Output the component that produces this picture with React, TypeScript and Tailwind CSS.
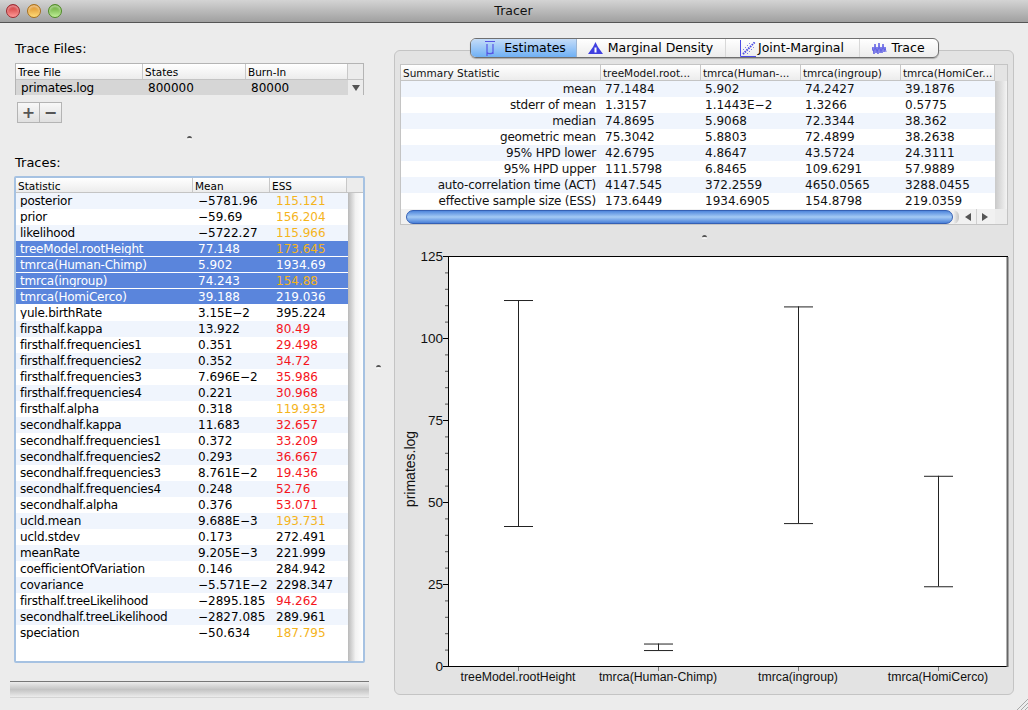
const files = { name: "primates.log", states: "800000", burn: "80000" }

const traces = [
  ["posterior", "-5781.96", "115.121", "o"],
  ["prior", "-59.69", "156.204", "o"],
  ["likelihood", "-5722.27", "115.966", "o"],
  ["treeModel.rootHeight", "77.148", "173.645", "o", 1],
  ["tmrca(Human-Chimp)", "5.902", "1934.69", "k", 1],
  ["tmrca(ingroup)", "74.243", "154.88", "o", 1],
  ["tmrca(HomiCerco)", "39.188", "219.036", "k", 1],
  ["yule.birthRate", "3.15E-2", "395.224", "k"],
  ["firsthalf.kappa", "13.922", "80.49", "r"],
  ["firsthalf.frequencies1", "0.351", "29.498", "r"],
  ["firsthalf.frequencies2", "0.352", "34.72", "r"],
  ["firsthalf.frequencies3", "7.696E-2", "35.986", "r"],
  ["firsthalf.frequencies4", "0.221", "30.968", "r"],
  ["firsthalf.alpha", "0.318", "119.933", "o"],
  ["secondhalf.kappa", "11.683", "32.657", "r"],
  ["secondhalf.frequencies1", "0.372", "33.209", "r"],
  ["secondhalf.frequencies2", "0.293", "36.667", "r"],
  ["secondhalf.frequencies3", "8.761E-2", "19.436", "r"],
  ["secondhalf.frequencies4", "0.248", "52.76", "r"],
  ["secondhalf.alpha", "0.376", "53.071", "r"],
  ["ucld.mean", "9.688E-3", "193.731", "o"],
  ["ucld.stdev", "0.173", "272.491", "k"],
  ["meanRate", "9.205E-3", "221.999", "k"],
  ["coefficientOfVariation", "0.146", "284.942", "k"],
  ["covariance", "-5.571E-2", "2298.347", "k"],
  ["firsthalf.treeLikelihood", "-2895.185", "94.262", "r"],
  ["secondhalf.treeLikelihood", "-2827.085", "289.961", "k"],
  ["speciation", "-50.634", "187.795", "o"],
] as const

const summary = [
  ["mean", "77.1484", "5.902", "74.2427", "39.1876"],
  ["stderr of mean", "1.3157", "1.1443E-2", "1.3266", "0.5775"],
  ["median", "74.8695", "5.9068", "72.3344", "38.362"],
  ["geometric mean", "75.3042", "5.8803", "72.4899", "38.2638"],
  ["95% HPD lower", "42.6795", "4.8647", "43.5724", "24.3111"],
  ["95% HPD upper", "111.5798", "6.8465", "109.6291", "57.9889"],
  ["auto-correlation time (ACT)", "4147.545", "372.2559", "4650.0565", "3288.0455"],
  ["effective sample size (ESS)", "173.6449", "1934.6905", "154.8798", "219.0359"],
]

const bars = [
  { label: "treeModel.rootHeight", lo: 42.68, hi: 111.58 },
  { label: "tmrca(Human-Chimp)", lo: 4.86, hi: 6.85 },
  { label: "tmrca(ingroup)", lo: 43.57, hi: 109.63 },
  { label: "tmrca(HomiCerco)", lo: 24.31, hi: 57.99 },
]

const minus = (s: string) => s.replace(/-/g, "\u2212")

const HeaderCell = ({ children, className }: any) => (
  <div className={"flex h-full items-center overflow-hidden whitespace-nowrap border-r border-[#c8c8c8] pl-[2px] pt-[2px] " + className}>{children}</div>
)

const SplitHandle = () => <div className="h-[4px] w-[5px] rounded-t-full border-t-2 border-[#555] bg-[#f4f4f4]" />

function TraceFiles() {
  return (
    <div className="w-[349px] border border-b-0 border-[#b4b4b4] bg-white">
      <div className="flex h-[16px] items-center border-b border-[#c4c4c4] bg-gradient-to-b from-white to-[#ececec] text-[10.5px] leading-none">
        <HeaderCell className="w-[127px]">Tree File</HeaderCell>
        <HeaderCell className="w-[103px]">States</HeaderCell>
        <HeaderCell className="w-[102px]">Burn-In</HeaderCell>
        <div className="h-full flex-1 bg-[#ececec]" />
      </div>
      <div className="flex h-[15px] items-center bg-[#d6d6d6] text-[12px] leading-none">
        <div className="w-[127px] pl-[5px] tracking-[-0.2px]">{files.name}</div>
        <div className="w-[103px] pl-[5px]">{files.states}</div>
        <div className="w-[102px] pl-[5px]">{files.burn}</div>
        <div className="flex h-full flex-1 justify-center bg-[#ececec] pt-[5px]">
          <div className="h-0 w-0 border-x-[4px] border-t-[6px] border-x-transparent border-t-[#555]" />
        </div>
      </div>
    </div>
  )
}

function TracesTable() {
  return (
    <div className="-ml-px flex h-[487px] w-[351px] flex-col rounded-[2px] border-2 border-[#a6c2e2] bg-white">
      <div className="flex h-[15px] shrink-0 items-center border-b border-[#c4c4c4] bg-gradient-to-b from-white to-[#ececec] text-[10.5px] leading-none">
        <HeaderCell className="w-[177px]">Statistic</HeaderCell>
        <HeaderCell className="w-[77px]">Mean</HeaderCell>
        <HeaderCell className="w-[77px]">ESS</HeaderCell>
        <div className="h-full flex-1 bg-[#ececec]" />
      </div>
      <div className="flex min-h-0 flex-1">
        <div className="w-[332px] text-[12px] leading-none">
          {traces.map((t, i) => {
            const selected = t.length > 4
            const rowBg = selected ? "bg-[#5a85dc] text-white border-b border-white" : i % 2 == 0 ? "bg-[#f0f5fd] text-black" : "bg-white text-black"
            const ess = t[3] == "o" ? "text-[#f5b41c]" : t[3] == "r" ? "text-[#f5141c]" : selected ? "text-white" : "text-black"
            return (
              <div key={t[0]} className={"flex h-[16px] items-center " + rowBg}>
                <div className="w-[177px] truncate pl-[4px] tracking-[-0.22px]">{t[0]}</div>
                <div className="w-[77px] pl-[5px]">{minus(t[1])}</div>
                <div className="w-[77px] pl-[6px]"><span className={ess}>{t[2]}</span></div>
              </div>
            )
          })}
        </div>
        <div className="flex-1 bg-gradient-to-r from-[#b9b9b9] via-[#f2f2f2] to-white" />
      </div>
    </div>
  )
}

function Tabs() {
  return (
    <div className="relative z-10 mx-auto flex h-[20px] w-[469px] overflow-hidden rounded-[6px] border border-[#6f6f6f] bg-gradient-to-b from-white to-[#ececec] text-[12.5px] leading-none shadow-[0_1px_1px_#aaa]">
      <div className="flex w-[106px] items-center justify-center gap-[8px] border-r border-[#9cb5d3] bg-gradient-to-b from-[#c4dcf8] to-[#6fb0f4] pl-[4px]">
        <svg width="12" height="17" viewBox="0 0 12 17" fill="none" stroke="#5656e4" strokeWidth="1.2">
          <path d="M1 1.5h10M3 4v12M3 12c0 2.2 5.5 2.2 6 0M9 4v10" />
        </svg>
        Estimates
      </div>
      <div className="flex w-[149px] items-center justify-center gap-[5px] border-r border-[#d8d8d8]">
        <svg width="15" height="12" viewBox="0 0 15 12" fill="#4040e0">
          <path d="M0 12 L5 5 L7.5 0 L10 5 L15 12 Z" />
          <path d="M6.5 5.5h2v5h-2z" fill="#fff" />
        </svg>
        Marginal Density
      </div>
      <div className="flex w-[134px] items-center justify-center gap-[2px] border-r border-[#d8d8d8]">
        <svg width="16" height="17" viewBox="0 0 16 17" fill="none" stroke="#4a4ae4">
          <path d="M.5 0v16.5H16" />
          <path d="M3 14 15 2" strokeDasharray="1.5 1" strokeWidth="2" />
          <path d="M3 10 10 3M7 14 14 7" strokeDasharray="1 2" />
        </svg>
        Joint-Marginal
      </div>
      <div className="flex flex-1 items-center justify-center gap-[3px]">
        <svg width="16" height="13" viewBox="0 0 16 13" fill="none" stroke="#4040e0" strokeWidth="0.8">
          <path d="M0 9l1-4 1 7 1-10 1 9 1-6 1 7 1-11 1 10 1-6 1 6 1-9 1 8 1-5 1 5" />
        </svg>
        Trace
      </div>
    </div>
  )
}

function SummaryTable() {
  return (
    <div className="mx-[5px] border border-[#c4c4c4] bg-[#ececec]">
      <div className="flex h-[16px] items-center bg-[#e4e4e4] text-[10.5px] leading-none">
        <div className="flex h-full w-[594px] border-b border-[#c4c4c4] bg-gradient-to-b from-white to-[#ececec]">
          <HeaderCell className="w-[200px]">Summary Statistic</HeaderCell>
          <HeaderCell className="w-[100px]">treeModel.root...</HeaderCell>
          <HeaderCell className="w-[100px]">tmrca(Human-...</HeaderCell>
          <HeaderCell className="w-[100px]">tmrca(ingroup)</HeaderCell>
          <HeaderCell className="w-[94px]">tmrca(HomiCer...</HeaderCell>
        </div>
      </div>
      <div className="flex">
        <div className="w-[594px] text-[12px] leading-none">
          {summary.map((r, i) => (
            <div key={r[0]} className={"flex h-[16px] items-center gap-px " + (i % 2 == 0 ? "bg-[#f0f5fd]" : "bg-white")}>
              <div className="w-[199px] pr-[4px] text-right tracking-[-0.2px]">{r[0]}</div>
              <div className="w-[99px] pl-[4px]">{minus(r[1])}</div>
              <div className="w-[99px] pl-[4px]">{minus(r[2])}</div>
              <div className="w-[99px] pl-[4px]">{minus(r[3])}</div>
              <div className="w-[93px] pl-[4px]">{minus(r[4])}</div>
            </div>
          ))}
        </div>
        <div className="flex-1 bg-gradient-to-r from-[#c9c9c9] to-[#f4f4f4]" />
      </div>
      <div className="flex h-[15px] items-center">
        <div className="flex h-full w-[594px] items-center bg-[#f1f1f1]">
          <div className="ml-[5px] h-[14px] w-[547px] rounded-full border border-[#3560b4] bg-gradient-to-b from-[#4f86dc] via-[#a4caf4] to-[#4a80d8]" />
          <div className="h-[14px] w-[6px] rounded-r-full bg-gradient-to-r from-[#f4f4f4] to-[#c4c4c4]" />
          <div className="flex h-full flex-1 items-center justify-center gap-[5px] pr-[2px]">
            <div className="h-0 w-0 border-y-[4px] border-r-[6px] border-y-transparent border-r-[#555]" />
            <div className="h-full w-px bg-[#d0d0d0]" />
            <div className="h-0 w-0 border-y-[4px] border-l-[6px] border-y-transparent border-l-[#555]" />
          </div>
        </div>
      </div>
    </div>
  )
}

function Chart() {
  const y = (v: number) => 410 - v * 3.28
  const minor = Array.from({ length: 26 }, (_, i) => i * 5)
  const major = [0, 25, 50, 75, 100, 125]
  return (
    <svg width="618" height="440" viewBox="0 0 618 440" className="block" style={{ fontFamily: '"Liberation Sans", sans-serif' }}>
      <g transform="translate(53 6)">
        <rect x="0.5" y="0.5" width="559" height="410" fill="white" stroke="black" />
        <path d="M559.5 1V411" stroke="#666" strokeWidth="2" />
        {minor.map((v) => (
          <path key={v} d={`M${major.includes(v) ? -5 : -3} ${y(v) + 0.5}H0`} stroke={major.includes(v) ? "#000" : "#555"} />
        ))}
        {major.map((v) => (
          <text key={v} x="-5" y={y(v) + 5} textAnchor="end" fontSize="13.5" fill="#111">{v}</text>
        ))}
        {bars.map((b, i) => {
          const cx = 70 + i * 140
          return (
            <g key={b.label} stroke="#222">
              <path d={`M${cx + 0.5} ${y(b.hi)}V${y(b.lo)}M${cx - 14} ${y(b.hi) + 0.5}H${cx + 15}M${cx - 14} ${y(b.lo) + 0.5}H${cx + 15}`} fill="none" />
              <path d={`M${cx + 0.5} 411v4`} stroke="#777" />
              <text x={cx} y="425" textAnchor="middle" fontSize="12.3" fill="#111" stroke="none">{b.label}</text>
            </g>
          )
        })}
      </g>
      <text transform="translate(20 219) rotate(-90)" textAnchor="middle" fontSize="14" fill="#111">primates.log</text>
    </svg>
  )
}

export default function App() {
  return (
    <div className="relative flex h-[710px] w-[1028px] flex-col overflow-hidden bg-[#ececec] text-black" style={{ fontFamily: '"DejaVu Sans", sans-serif' }}>
      <div className="flex h-[23px] shrink-0 items-center border-b border-[#555] bg-gradient-to-b from-[#d4d4d4] to-[#a0a0a0] pl-[6px]">
        <div className="h-[14px] w-[14px] rounded-full border border-[#9a2a30] bg-gradient-to-b from-[#c8202c] to-[#ff9a9a] shadow-[inset_0_2px_2px_rgba(255,255,255,0.45)]" />
        <div className="ml-[7px] h-[14px] w-[14px] rounded-full border border-[#a8701c] bg-gradient-to-b from-[#d8891a] to-[#ffdc78] shadow-[inset_0_2px_2px_rgba(255,255,255,0.45)]" />
        <div className="ml-[7px] h-[14px] w-[14px] rounded-full border border-[#4f8a26] bg-gradient-to-b from-[#5fa32a] to-[#c0f098] shadow-[inset_0_2px_2px_rgba(255,255,255,0.45)]" />
        <div className="flex-1 pr-[63px] text-center text-[12.5px] leading-none text-[#111]">Tracer</div>
      </div>

      <div className="flex min-h-0 flex-1">
        <div className="w-[375px] shrink-0 pl-[15px] pt-[18px]">
          <div className="text-[13px] leading-[16px]">Trace Files:</div>
          <div className="mt-[6px]"><TraceFiles /></div>
          <div className="ml-[2px] mt-[7px] flex h-[21px] w-[45px] border border-[#b4b4b4] bg-gradient-to-b from-[#f8f8f8] to-[#e0e0e0] text-[#555]">
            <div className="flex w-[22px] items-center justify-center border-r border-[#b4b4b4] text-[16px] font-bold leading-none">+</div>
            <div className="flex flex-1 items-center justify-center text-[16px] font-bold leading-none">−</div>
          </div>
          <div className="ml-[172px] mt-[13px]"><SplitHandle /></div>
          <div className="mt-[15px] text-[13px] leading-[16px]">Traces:</div>
          <div className="mt-[5px]"><TracesTable /></div>
          <div className="-ml-[5px] mt-[18px] h-[17px] w-[359px] border-b border-t border-b-[#d4d4d4] border-t-[#777] bg-gradient-to-b from-[#ececec] via-[#c4c4c4] to-[#ececec]" />
        </div>

        <div className="flex w-[19px] shrink-0 items-center justify-center pr-[12px]"><SplitHandle /></div>

        <div className="w-[620px] shrink-0 pt-[15px]">
          <Tabs />
          <div className="-mt-[8px] flex h-[645px] flex-col rounded-[6px] border border-[#c4c4c4] bg-[#e3e3e3] pt-[13px] text-[#111]">
            <SummaryTable />
            <div className="mx-auto mt-[10px]"><SplitHandle /></div>
            <div className="mt-[11px]"><Chart /></div>
          </div>
        </div>
      </div>

      <svg className="absolute bottom-0 right-0" width="11" height="11" viewBox="0 0 11 11" stroke="#a8a8a8">
        <path d="M0 11 11 0M4 11l7-7M8 11l3-3" />
      </svg>
    </div>
  )
}
